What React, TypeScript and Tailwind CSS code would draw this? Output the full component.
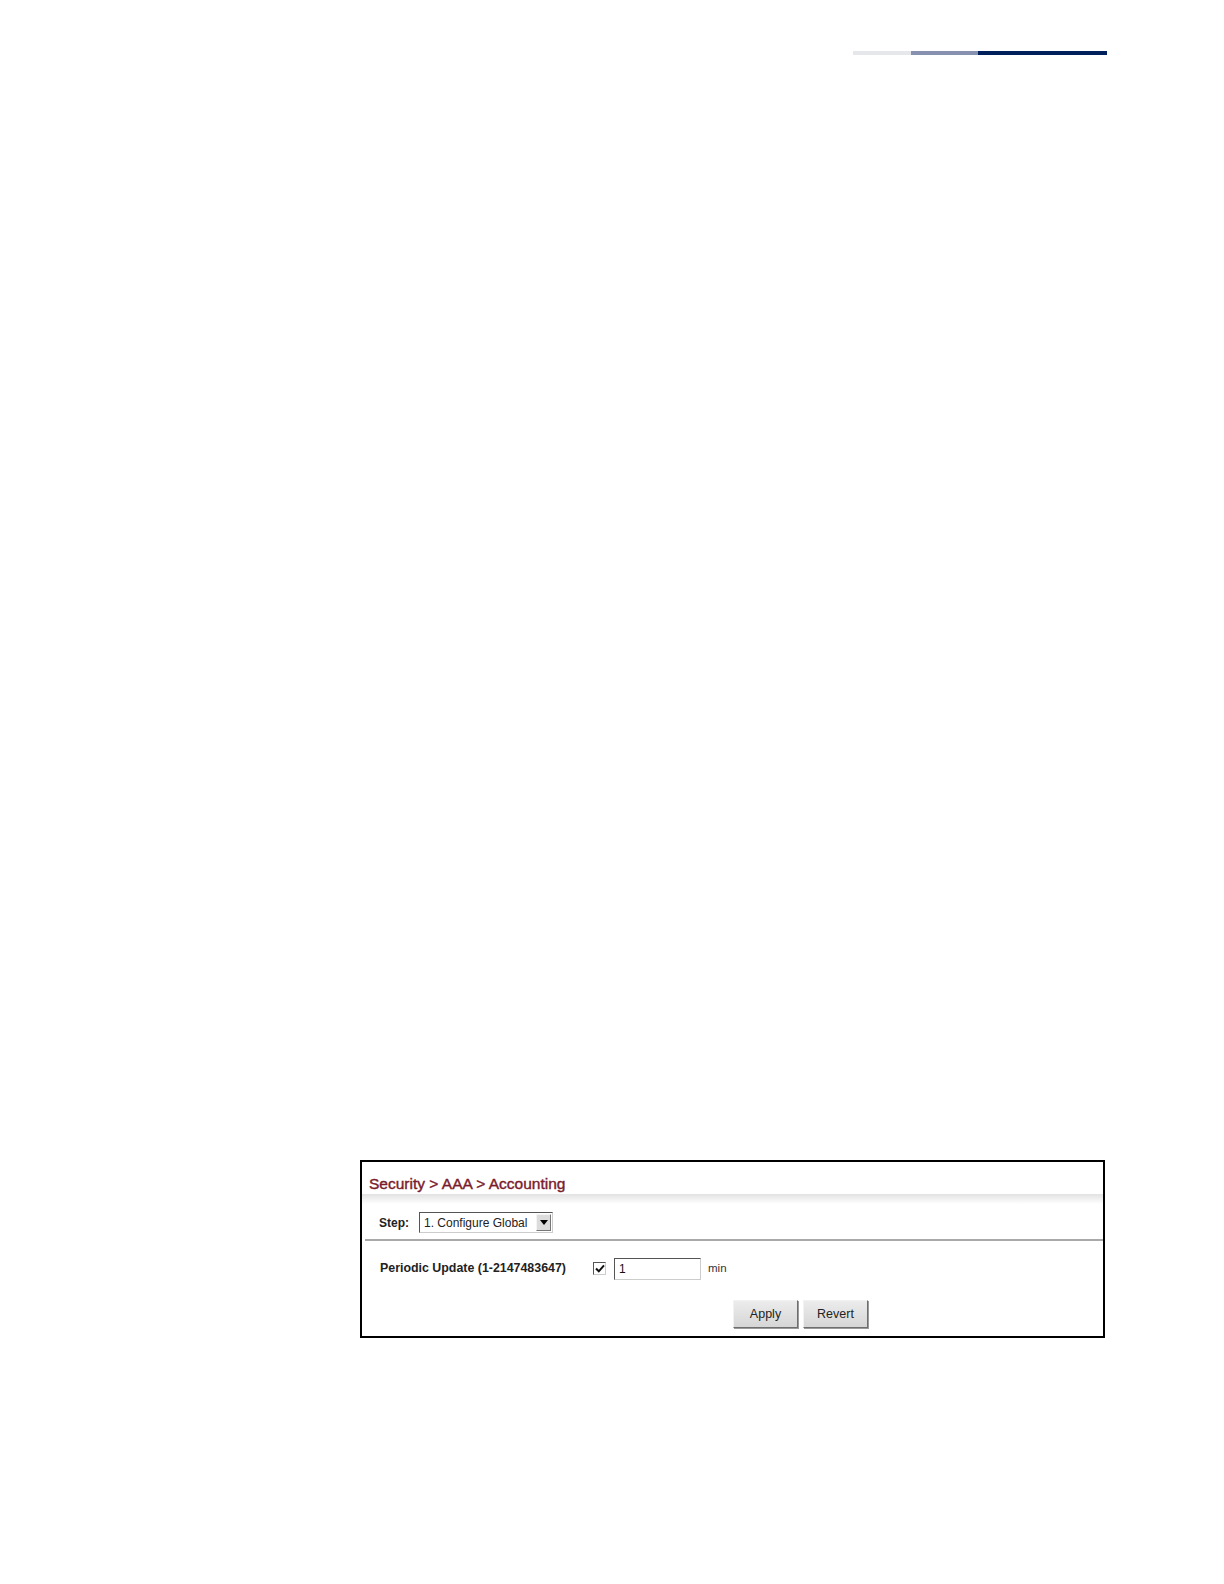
export default function App() {
  return (
    <div className="relative h-[1584px] w-[1224px] bg-white font-['Liberation_Sans',Arial,sans-serif]">
      {/* header rule */}
      <div className="flex justify-end pr-[117px] pt-[51px]">
        <div className="flex h-[4px] w-[254px]">
          <div className="w-[58px] bg-[#e6e7eb]" />
          <div className="w-[67px] bg-[#8890b0]" />
          <div className="flex-1 bg-[#00205b]" />
        </div>
      </div>

      {/* screenshot panel */}
      <div className="ml-[360px] mt-[1105px] h-[178px] w-[745px] border-2 border-black bg-white">
        <div className="flex h-[32px] items-end pb-[3px] pl-[7px] text-[15.5px] leading-none text-[#7a1b2b] [-webkit-text-stroke:0.4px_#7a1b2b]">
          Security &gt; AAA &gt; Accounting
        </div>
        <div className="h-[10px] bg-gradient-to-b from-[#e2e2e2] to-white" />
        <div className="flex h-[35px] items-center pt-[2px] pl-[17px]">
          <span className="text-[12px] font-bold text-[#222]">Step:</span>
          <div className="ml-[10px] flex h-[21px] w-[134px] items-center border border-t-[#555] border-l-[#555] border-b-[#ccc] border-r-[#ccc] bg-white">
            <span className="flex-1 pl-[4px] text-[12px] text-[#222]">1. Configure Global</span>
            <div className="mr-[1px] flex h-[17px] w-[15px] items-center justify-center border border-t-[#f4f4f4] border-l-[#f4f4f4] border-b-[#777] border-r-[#777] bg-[#dcdcdc]">
              <div className="h-0 w-0 border-x-[4px] border-t-[5px] border-x-transparent border-t-black" />
            </div>
          </div>
        </div>
        <div className="ml-[3px] h-[2px] bg-[#a9a9a9]" />
        <div className="flex h-[54px] items-center pt-[1px]">
          <span className="ml-[18px] w-[213px] text-[12.4px] font-bold text-[#222]">
            Periodic Update (1-2147483647)
          </span>
          <div className="flex h-[13px] w-[13px] items-center justify-center border border-t-[#555] border-l-[#555] border-b-[#ccc] border-r-[#ccc] bg-white">
            <svg width="10" height="9" viewBox="0 0 10 9">
              <path d="M1 4.5 L3.8 7.3 L9 1.3" fill="none" stroke="#111" strokeWidth="2" />
            </svg>
          </div>
          <div className="ml-[8px] flex h-[22px] w-[87px] items-center border border-t-[#555] border-l-[#555] border-b-[#ccc] border-r-[#ccc] bg-white pl-[4px] text-[12px] text-[#111]">
            1
          </div>
          <span className="ml-[7px] text-[11.5px] text-[#333]">min</span>
        </div>
        <div className="flex pl-[371px] pt-[5px]">
          <button className="h-[28px] w-[65px] border border-t-[#f2f2f2] border-l-[#f2f2f2] border-b-[#6e6e6e] border-r-[#6e6e6e] bg-gradient-to-b from-[#ececec] to-[#d6d6d6] text-[12.5px] text-[#222] shadow-[1px_1px_0_#9a9a9a]">
            Apply
          </button>
          <button className="ml-[5px] h-[28px] w-[65px] border border-t-[#f2f2f2] border-l-[#f2f2f2] border-b-[#6e6e6e] border-r-[#6e6e6e] bg-gradient-to-b from-[#ececec] to-[#d6d6d6] text-[12.5px] text-[#222] shadow-[1px_1px_0_#9a9a9a]">
            Revert
          </button>
        </div>
      </div>
    </div>
  );
}
